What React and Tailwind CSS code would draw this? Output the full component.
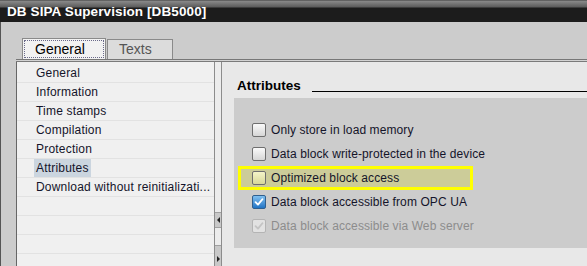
import { useState } from 'react';

const navItems = [
  'General',
  'Information',
  'Time stamps',
  'Compilation',
  'Protection',
  'Attributes',
  'Download without reinitializati...',
];

const attributes = [
  { label: 'Only store in load memory', checked: false },
  { label: 'Data block write-protected in the device', checked: false },
  { label: 'Optimized block access', checked: false, marked: true },
  { label: 'Data block accessible from OPC UA', checked: true },
  { label: 'Data block accessible via Web server', checked: true, disabled: true },
];

const CheckMark = ({ color }) => (
  <svg viewBox="0 0 14 14" className="w-[14px] h-[14px]">
    <path d="M3 7.2 L5.8 10 L11 3.8" fill="none" stroke={color} strokeWidth="2.2" strokeLinecap="round" strokeLinejoin="round" />
  </svg>
);

const Checkbox = ({ checked, disabled, marked }) => {
  if (checked && !disabled) {
    return (
      <div className="w-[14px] h-[14px] rounded-[2px] border border-[#2f5f8f] bg-gradient-to-b from-[#7fc0f0] to-[#1f74c4] flex items-center justify-center">
        <CheckMark color="#ffffff" />
      </div>
    );
  }
  if (checked && disabled) {
    return (
      <div className="w-[14px] h-[14px] rounded-[2px] border border-[#b4b4b4] bg-[#e2e2e2] flex items-center justify-center">
        <CheckMark color="#c4c4c4" />
      </div>
    );
  }
  return (
    <div
      className={`w-[14px] h-[14px] rounded-[2px] border border-[#6f6f6f] bg-gradient-to-b ${
        marked ? 'from-[#f4f4c8] to-[#d8d89a]' : 'from-[#fafafa] to-[#d6d6d6]'
      }`}
    />
  );
};

const App = () => {
  const [active, setActive] = useState('Attributes');

  return (
    <div className="w-[587px] h-[266px] overflow-hidden flex flex-col bg-[#cccccc] font-['Liberation_Sans',Arial,sans-serif] text-[#14142a] select-none">
      {/* Title bar */}
      <div className="h-[22px] shrink-0 bg-[linear-gradient(to_bottom,#3a3a3a_0px,#8a8a8a_1px,#5c5c5c_7px,#1c1c1c_8px,#1c1c1c_100%)] flex items-center pl-[7px]">
        <span className="text-white font-bold text-[13.5px] tracking-[0.1px] leading-none pt-[2px]">DB SIPA Supervision [DB5000]</span>
      </div>

      {/* Body */}
      <div className="flex-1 min-h-0 flex flex-col border-l border-[#555555] pl-[15px]">
        {/* Tabs */}
        <div className="h-[37px] shrink-0 flex items-end pl-[6px] gap-[1px]">
          <div className="h-[21px] w-[84px] bg-[#f2f2f2] border border-b-0 border-[#8a8a8a] p-[1px]">
            <div className="h-full border border-dotted border-[#6a6a8a] flex items-center pl-[10px] text-[14px] text-black">
              General
            </div>
          </div>
          <div className="h-[20px] w-[66px] bg-[#dcdcdc] border border-b-0 border-[#8a8a8a] flex items-center pl-[11px] text-[14px] text-[#555555]">
            Texts
          </div>
        </div>

        {/* Panel */}
        <div className="flex-1 min-h-0 flex border-t border-[#777777]">
          <div className="flex-1 min-h-0 flex border-t border-[#d2d2d2]">
            <div className="flex-1 min-h-0 flex border-t border-[#7a7a7a]">
              {/* Navigation list */}
              <div className="w-[198px] shrink-0 bg-[#f0f0f0] border-l border-[#666666] pt-[2px] overflow-hidden">
                {navItems.map((item) => (
                  <div
                    key={item}
                    onClick={() => setActive(item)}
                    className="h-[19px] border-b border-[#e2e2e2] pl-[17px] flex items-stretch text-[12px] tracking-[0.2px]"
                  >
                    <span
                      className={`flex items-center px-[2px] whitespace-nowrap ${
                        active === item ? 'bg-[#cbd5df]' : ''
                      }`}
                    >
                      {item}
                    </span>
                  </div>
                ))}
                {[0, 1, 2].map((i) => (
                  <div key={i} className="h-[19px] border-b border-[#e2e2e2]" />
                ))}
              </div>

              {/* Splitter */}
              <div className="w-[8px] shrink-0 border-x border-[#8c8c8c] bg-[#ececec] flex flex-col">
                <div className="h-[150px]" />
                <div className="h-[16px] bg-[#c8c8c8] border-y border-[#a0a0a0] flex items-center justify-center">
                  <div className="w-0 h-0 border-y-[3px] border-y-transparent border-r-[3px] border-r-[#222222]" />
                </div>
                <div className="h-[17px]" />
                <div className="flex-1 bg-[#c8c8c8] border-t border-[#a0a0a0] flex items-start justify-center pt-[10px]">
                  <div className="w-0 h-0 border-y-[3px] border-y-transparent border-l-[3px] border-l-[#222222]" />
                </div>
              </div>

              {/* Right panel */}
              <div className="flex-1 min-w-0 bg-[#e8e8e8] flex flex-col">
                <div className="h-[33px] shrink-0 flex items-end pl-[15px]">
                  <span className="font-bold text-[13.5px] leading-none text-black pb-[3px]">Attributes</span>
                  <div className="flex-1 ml-[11px] mb-[3px] border-b border-black" />
                </div>
                <div className="mt-[3px] ml-[12px] h-[150px] bg-[#cccccc] pt-[20px] flex flex-col">
                  {attributes.map((a) => (
                    <div
                      key={a.label}
                      className={`h-[24px] ml-[4px] border-[3px] pl-[11px] flex items-center gap-[5px] ${
                        a.marked ? 'w-[235px] border-[#ffff00] bg-[#cccc99]' : 'w-fit border-transparent'
                      }`}
                    >
                      <Checkbox checked={a.checked} disabled={a.disabled} marked={a.marked} />
                      <span className={`text-[12px] tracking-[0.1px] whitespace-nowrap ${a.disabled ? 'text-[#8c8c8c]' : ''}`}>{a.label}</span>
                    </div>
                  ))}
                </div>
              </div>
            </div>
          </div>
        </div>
      </div>
    </div>
  );
};

export default App;
